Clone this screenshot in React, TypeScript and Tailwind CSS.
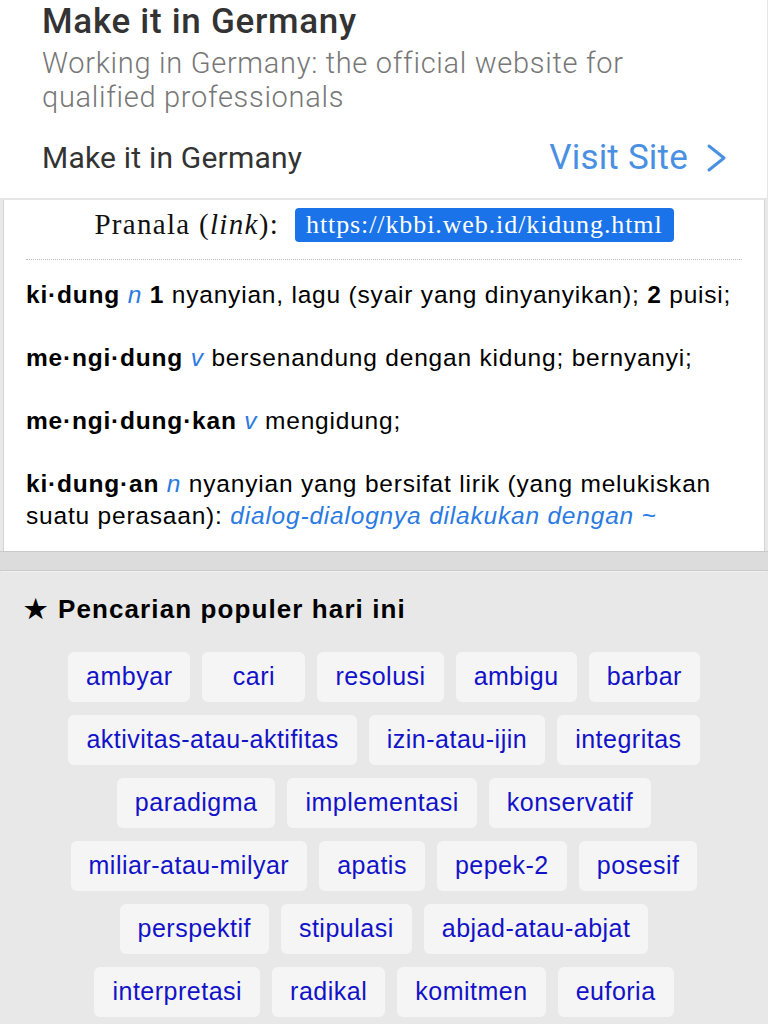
import React from 'react';

const popular: string[][] = [
  ['ambyar', 'cari', 'resolusi', 'ambigu', 'barbar'],
  ['aktivitas-atau-aktifitas', 'izin-atau-ijin', 'integritas'],
  ['paradigma', 'implementasi', 'konservatif'],
  ['miliar-atau-milyar', 'apatis', 'pepek-2', 'posesif'],
  ['perspektif', 'stipulasi', 'abjad-atau-abjat'],
  ['interpretasi', 'radikal', 'komitmen', 'euforia'],
];

function AdCard() {
  return (
    <div className="h-[200px] bg-white border-b-2 border-r border-[#e6e6e6] px-[42px] font-['Roboto',sans-serif]">
      <h1 className="pt-[2px] text-[35px] leading-[40px] font-medium text-[#333] tracking-[0.7px]">Make it in Germany</h1>
      <p className="mt-[4px] text-[29px] leading-[34px] font-light text-[#777] tracking-[0.7px]">
        Working in Germany: the official website for qualified professionals
      </p>
      <div className="mt-[24px] flex items-center justify-between">
        <span className="text-[30px] leading-[40px] text-[#333] tracking-[0.2px]">Make it in Germany</span>
        <span className="flex items-center gap-[18px] -mr-[3px] text-[35px] leading-[40px] text-[#4a90e2] tracking-[0.2px]">
          Visit Site
          <svg width="22" height="30" viewBox="0 0 22 30" fill="none">
            <polyline points="3,3 18,15 3,27" stroke="#4a90e2" strokeWidth="3" strokeLinecap="round" strokeLinejoin="round" />
          </svg>
        </span>
      </div>
    </div>
  );
}

function Definition() {
  return (
    <div className="h-[351px] bg-white border-x border-[#d4d4d4] mx-[3px] px-[22px]">
      <div className="flex items-center justify-center gap-[16px] h-[49px] pt-[1px] font-['Liberation_Serif',serif] text-[#111]">
        <span className="text-[29px] tracking-[1.3px]">
          Pranala (<i>link</i>):
        </span>
        <span className="bg-[#1a73e8] text-white rounded-[4px] px-[11px] h-[34px] leading-[34px] text-[26px] tracking-[0.9px]">
          https://kbbi.web.id/kidung.html
        </span>
      </div>
      <div className="mt-[10px] border-t border-dotted border-[#bbb]" />
      <div className="mt-[19px] font-['Liberation_Sans',Arial,sans-serif] text-[24.5px] leading-[31.5px] text-black tracking-[0.8px]">
        <p>
          <b>ki·dung</b> <i className="text-[#2a7ae2]">n</i> <b>1</b> nyanyian, lagu (syair yang dinyanyikan); <b>2</b> puisi;
        </p>
        <p className="mt-[31.5px]">
          <b>me·ngi·dung</b> <i className="text-[#2a7ae2]">v</i> bersenandung dengan kidung; bernyanyi;
        </p>
        <p className="mt-[31.5px]">
          <b>me·ngi·dung·kan</b> <i className="text-[#2a7ae2]">v</i> mengidung;
        </p>
        <p className="mt-[31.5px]">
          <b>ki·dung·an</b> <i className="text-[#2a7ae2]">n</i> nyanyian yang bersifat lirik (yang melukiskan suatu perasaan):{' '}
          <i className="text-[#2a7ae2]">dialog-dialognya dilakukan dengan ~</i>
        </p>
      </div>
    </div>
  );
}

function Popular() {
  return (
    <div className="bg-[#e8e8e8] border-t border-[#f2f2f2] mx-[1px] pb-[8px] font-['Liberation_Sans',Arial,sans-serif]">
      <h2 className="flex items-center gap-[11px] pl-[23px] pb-[6px] h-[80px] text-[26px] font-bold text-black tracking-[1.1px] leading-[36px]">
        <span className="text-[26px] tracking-normal">★</span>
        <span>Pencarian populer hari ini</span>
      </h2>
      <div className="flex flex-col gap-[13px]">
        {popular.map((row, i) => (
          <div key={i} className="flex justify-center gap-[12px]">
            {row.map((w) => (
              <span
                key={w}
                className="h-[50px] min-w-[103px] flex items-center justify-center px-[18px] bg-[#f5f5f5] rounded-[6px] text-[25px] text-[#1212c8] tracking-[0.5px]"
              >
                {w}
              </span>
            ))}
          </div>
        ))}
      </div>
    </div>
  );
}

export default function App() {
  return (
    <div className="w-[768px] h-[1024px] overflow-hidden bg-[#e8e8e8]">
      <AdCard />
      <Definition />
      <div className="h-[20px] bg-[#dcdcdc] border-y border-[#cacaca]" />
      <Popular />
    </div>
  );
}
